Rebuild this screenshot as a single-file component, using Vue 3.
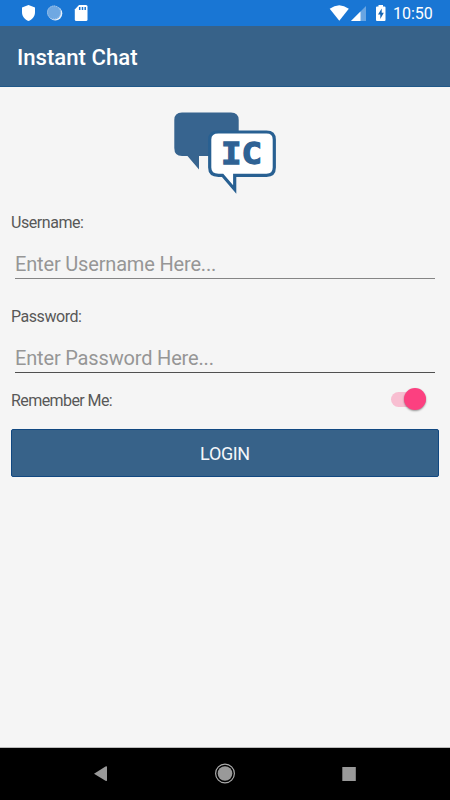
<script setup>
import { ref } from 'vue'

const username = ref('')
const password = ref('')
const remember = ref(true)
</script>

<template>
  <div class="screen">
    <header class="status">
      <svg class="status-icons" width="80" height="26" viewBox="0 0 80 26">
        <path d="M28.500 5L35 7.500V12C35 16.500 32 19.800 28.500 21C25 19.800 22 16.500 22 12V7.500Z" fill="#fff" />
        <circle cx="55.300" cy="13.500" r="7" fill="#e6f0fb" />
        <circle cx="54" cy="12.500" r="7" fill="#6fa8e2" />
        <circle cx="54" cy="12.500" r="6.500" fill="none" stroke="#a9cbef" stroke-dasharray="1 1" />
      </svg>
      <svg width="14" height="26" viewBox="0 0 14 26">
        <path d="M5 5H12Q13.500 5 13.500 6.500V19.500Q13.500 21 12 21H2.300Q.8 21 .8 19.500V9.500Z" fill="#fff" />
        <path d="M5.700 7V10M8.500 7V10M11.200 7V10" stroke="#1976d2" stroke-width="1.500" />
      </svg>
      <svg class="signals" width="90" height="26" viewBox="325 0 90 26">
        <path d="M329.700 8.800Q339.200 1.700 348.800 8.800L339.300 20.700Z" fill="#fff" />
        <path d="M366 6V21H351Z" fill="#69a5e2" />
        <path d="M360.500 11.500V21H351Z" fill="#fff" />
        <path d="M378.500 5H383V6.500H384.500Q385.500 6.500 385.500 7.500V20Q385.500 21 384.500 21H377Q376 21 376 20V7.500Q376 6.500 377 6.500H378.500Z" fill="#fff" />
        <path d="M381.700 8.500L378 14.500H380.300V19L383.800 12.700H381.700Z" fill="#1565b5" />
      </svg>
      <span class="clock">10:50</span>
    </header>
    <div class="toolbar"><h1>Instant Chat</h1></div>

    <main>
      <svg class="logo" width="104" height="84" viewBox="173 111 104 84">
        <path d="M182 112.500H231Q238.700 112.500 238.700 120V156H199V169.500L187.500 156H182Q174.300 156 174.300 148V120Q174.300 112.500 182 112.500Z" fill="#37648f" />
        <path d="M218.500 132H266.500Q274.300 132 274.300 139.500V167.500Q274.300 175.300 266.500 175.300H234.700V189.500L222.500 175.300H218.500Q209.700 175.300 209.700 167.500V139.500Q209.700 132 218.500 132Z" fill="#fff" stroke="#286092" stroke-width="3.200" />
        <text x="221" y="164.400" class="monogram" textLength="41" lengthAdjust="spacingAndGlyphs">IC</text>
      </svg>

      <label class="label" for="user">Username:</label>
      <input id="user" v-model="username" class="field" placeholder="Enter Username Here..." />
      <label class="label second" for="pass">Password:</label>
      <input id="pass" v-model="password" class="field dark" type="password" placeholder="Enter Password Here..." />

      <div class="remember">
        <span>Remember Me:</span>
        <button class="switch" :class="{ on: remember }" aria-label="Remember Me" @click="remember = !remember">
          <i></i>
        </button>
      </div>
      <button class="login">LOGIN</button>
    </main>

    <nav>
      <svg width="450" height="52" viewBox="0 748 450 52">
        <path d="M94 773.700L105.500 766.500Q107 765.700 107 767V780.300Q107 781.600 105.500 780.800Z" fill="#999" />
        <circle cx="225" cy="773.500" r="9.400" fill="none" stroke="#aaa" stroke-width="1.200" />
        <circle cx="225" cy="773.500" r="7.300" fill="#999" />
        <rect x="342.300" y="767" width="13.500" height="14" fill="#999" />
      </svg>
    </nav>
  </div>
</template>

<style>
body { margin: 0; background: #f5f5f5; }
</style>
<style scoped>
.screen {
  width: 450px;
  height: 800px;
  display: flex;
  flex-direction: column;
  background: #f5f5f5;
  font-family: Roboto, sans-serif;
  color: #585858;
  overflow: hidden;
}
svg { display: block; flex: none; }
.status {
  height: 26px;
  display: flex;
  background: #1976d4;
  color: #fff;
}
.status-icons { margin-right: -6px; }
.signals { margin-left: 237px; margin-right: -22px; }
.clock { font-size: 16px; line-height: 28px; }
.toolbar {
  height: 61px;
  box-sizing: border-box;
  padding-left: 17px;
  background: #376289;
  border-bottom: 1px solid #205889;
}
h1 { margin: 0; font-size: 22.15px; font-weight: 500; line-height: 63px; color: #fff; }
main {
  flex: 1;
  box-sizing: border-box;
  display: flex;
  flex-direction: column;
  padding: 24px 11px 0;
  border-bottom: 1px solid #bbb;
}
.logo { margin-left: 162px; }
.monogram {
  font: bold 31px "DejaVu Sans Mono", monospace;
  fill: #2f6294;
  stroke: #2f6294;
  stroke-width: 1.3px;
}
.label { margin-top: 17px; height: 20px; font-size: 16px; letter-spacing: -.45px; line-height: 21px; }
.label.second { margin-top: 27px; }
.field {
  box-sizing: border-box;
  height: 30px;
  margin: 17px 4px 0;
  padding: 0;
  border: 0;
  border-bottom: 1px solid #858585;
  border-radius: 0;
  outline: 0;
  background: transparent;
  font: 20px/30px Roboto, sans-serif;
  letter-spacing: -.17px;
  color: #333;
}
.field.dark { border-color: #505050; }
.field::placeholder { color: #969696; opacity: 1; }
.remember {
  display: flex;
  align-items: center;
  justify-content: space-between;
  height: 24px;
  margin-top: 15px;
  padding-right: 13px;
  font-size: 16px;
  letter-spacing: -.58px;
}
.switch {
  display: flex;
  align-items: center;
  width: 35px;
  height: 15px;
  margin-top: -2px;
  padding: 0;
  border: 0;
  border-radius: 8px;
  background: #c5c5c5;
}
.switch i {
  width: 22px;
  height: 22px;
  flex: none;
  border-radius: 50%;
  background: #eee;
  box-shadow: 0 1px 2px rgba(0, 0, 0, .4);
}
.switch.on { justify-content: flex-end; background: #f8bed1; }
.switch.on i { background: #fc4080; }
.login {
  height: 48px;
  margin-top: 17px;
  padding: 1px 0 0;
  border: 1px solid #114881;
  border-radius: 2px;
  background: #376289;
  color: #f4f7fa;
  font: 18px Roboto, sans-serif;
  letter-spacing: -.35px;
}
nav { height: 52px; background: #000; }
</style>
